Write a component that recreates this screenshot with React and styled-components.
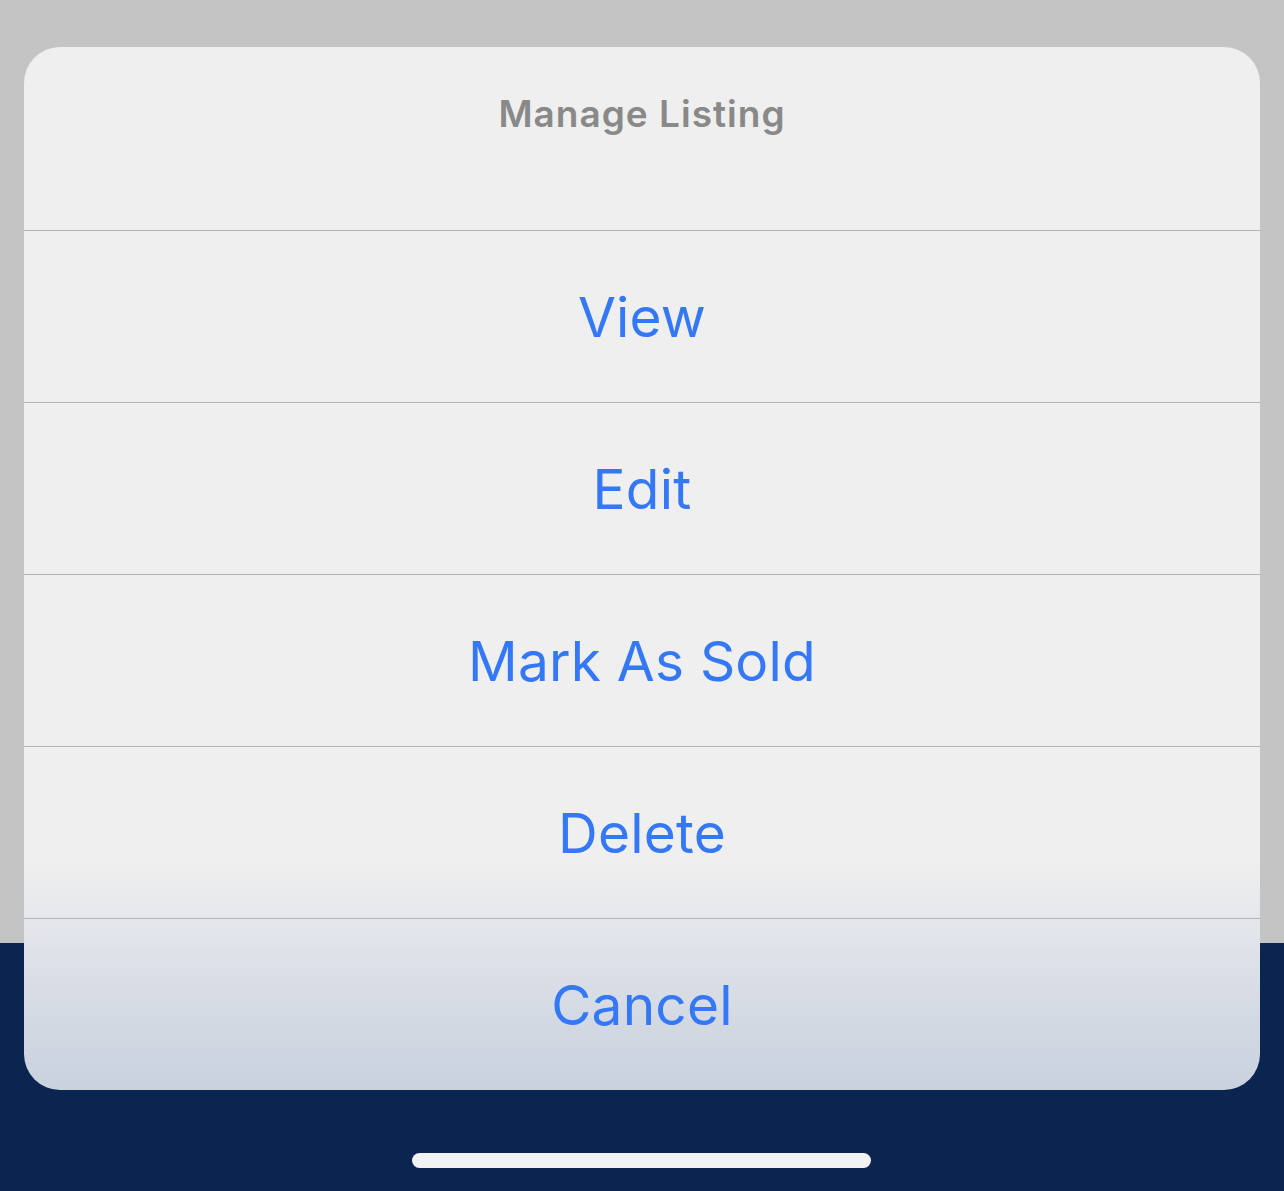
import React from 'react'
import styled, { createGlobalStyle } from 'styled-components'

const GlobalStyle = createGlobalStyle`
  html, body {
    margin: 0;
    padding: 0;
  }
  body {
    font-family: Inter, "Noto Sans", "Liberation Sans", sans-serif;
    -webkit-font-smoothing: antialiased;
  }
`

const actions = ['View', 'Edit', 'Mark As Sold', 'Delete']

const App = () => (
  <Page>
    <GlobalStyle />
    <Sheet>
      <Header>
        <Title>Manage Listing</Title>
      </Header>
      {actions.map(label => (
        <Action key={label}>{label}</Action>
      ))}
      <Action last>Cancel</Action>
    </Sheet>
    <HomeIndicator />
  </Page>
)

export default App

const Page = styled.div`
  width: 1284px;
  height: 1191px;
  box-sizing: border-box;
  padding: 47px 24px 0 24px;
  display: flex;
  flex-direction: column;
  align-items: center;
  overflow: hidden;
  background: linear-gradient(to bottom, #c4c4c4 0, #c4c4c4 943px, #0c2450 943px, #0c2450 100%);
`

const Sheet = styled.div`
  width: 1236px;
  height: 1043px;
  border-radius: 36px;
  overflow: hidden;
  display: flex;
  flex-direction: column;
  background: linear-gradient(
    to bottom,
    #efefef 0,
    #efefef 78%,
    #e4e6ea 84%,
    #dde1e8 87.5%,
    #d2d8e2 94%,
    #c9d2df 100%
  );
`

const Header = styled.div`
  height: 184px;
  display: flex;
  justify-content: center;
  padding-top: 43px;
  box-sizing: border-box;
  border-bottom: 1px solid #b4b4b6;
  flex-shrink: 0;
`

const Title = styled.div`
  font-size: 37px;
  font-weight: 600;
  color: #898989;
  letter-spacing: 1px;
  line-height: 48px;
`

const Action = styled.div`
  height: 171px;
  display: flex;
  align-items: center;
  justify-content: center;
  font-size: 55px;
  font-weight: 400;
  color: #3478f5;
  letter-spacing: 0.2px;
  border-bottom: ${p => (p.last ? 'none' : '1px solid #b4b4b6')};
  flex-shrink: 0;
`

const HomeIndicator = styled.div`
  margin-top: 63px;
  margin-left: -1px;
  width: 459px;
  height: 15px;
  border-radius: 8px;
  background: #f2f2f4;
`
